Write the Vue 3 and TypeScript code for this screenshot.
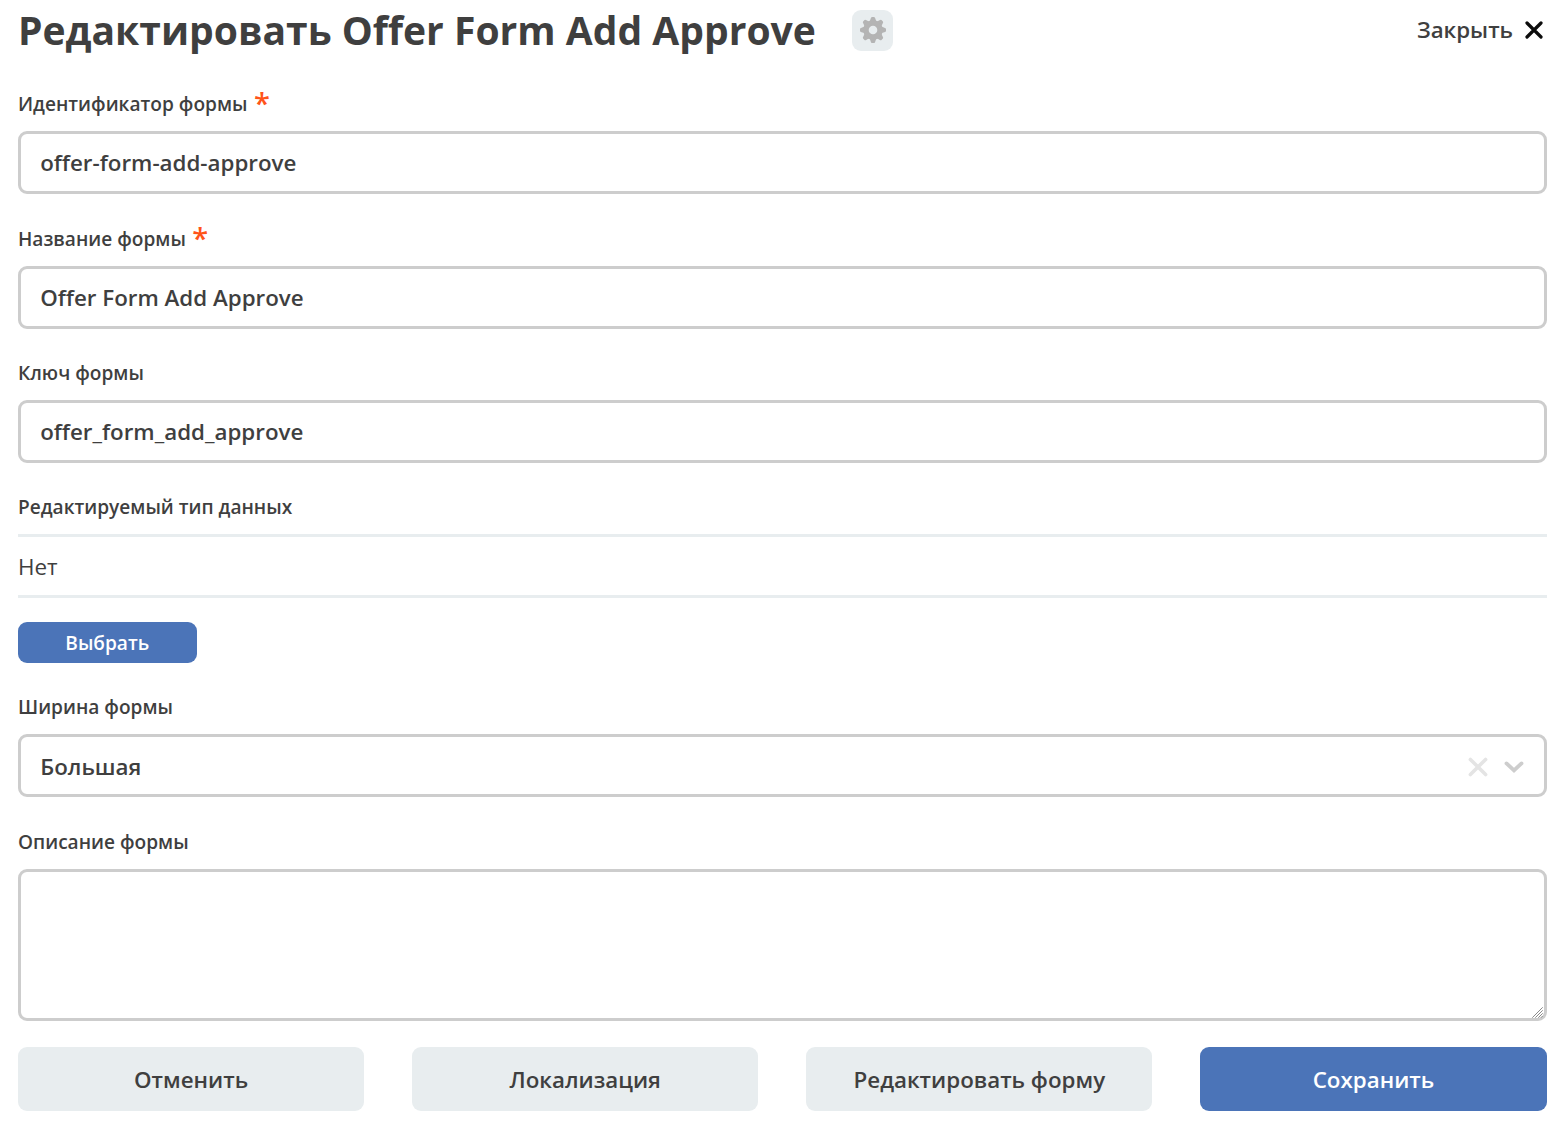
<script setup lang="ts">
import { ref } from 'vue'

interface TextField {
  id: string
  label: string
  required: boolean
}

const fields: TextField[] = [
  { id: 'identifier', label: 'Идентификатор формы', required: true },
  { id: 'name', label: 'Название формы', required: true },
  { id: 'key', label: 'Ключ формы', required: false },
]

const values = ref<Record<string, string>>({
  identifier: 'offer-form-add-approve',
  name: 'Offer Form Add Approve',
  key: 'offer_form_add_approve',
})
const width = ref('Большая')
const description = ref('')

const actions = [
  { label: 'Отменить', primary: false },
  { label: 'Локализация', primary: false },
  { label: 'Редактировать форму', primary: false },
  { label: 'Сохранить', primary: true },
]
</script>

<template>
  <main class="page">
    <header class="header">
      <h1 class="title">Редактировать Offer Form Add Approve</h1>
      <button class="gear" type="button" aria-label="Настройки">
        <svg viewBox="-13 -13 26 26" width="26" height="26" fill="#b4b4b4">
          <path v-for="n in 8" :key="n" d="M-4 -8.4Q-2.6 -9.4 -2.3 -11.4Q-2 -13 -1 -13H1Q2 -13 2.3 -11.4Q2.6 -9.4 4 -8.4V-5H-4Z" :transform="`rotate(${n * 45})`" />
          <circle r="9.4" />
          <circle r="4.3" fill="#e8edef" />
        </svg>
      </button>
      <button class="close" type="button">
        <span>Закрыть</span>
        <svg viewBox="0 0 18 18" width="18" height="18" fill="none" stroke="#0c0c0c" stroke-width="3.2" stroke-linecap="round">
          <path d="M2 2 16 16M16 2 2 16" />
        </svg>
      </button>
    </header>

    <div v-for="f in fields" :key="f.id" class="field">
      <label class="label" :for="f.id">{{ f.label }}<span v-if="f.required" class="star">*</span></label>
      <input :id="f.id" v-model="values[f.id]" class="input" type="text" />
    </div>

    <section class="type">
      <div class="label">Редактируемый тип данных</div>
      <div class="type-value">Нет</div>
      <button class="pick" type="button">Выбрать</button>
    </section>

    <div class="field">
      <div class="label">Ширина формы</div>
      <div class="input select">
        <span class="select-value">{{ width }}</span>
        <svg class="clear" viewBox="0 0 20 20" width="20" height="20" fill="none" stroke="#e4e4e4" stroke-width="3.6" stroke-linecap="round">
          <path d="M2.4 2.4 17.6 17.6M17.6 2.4 2.4 17.6" />
        </svg>
        <svg class="chevron" viewBox="0 0 20 12" width="20" height="12" fill="none" stroke="#cdcdcd" stroke-width="3.8" stroke-linecap="round">
          <path d="M2.5 2.4 10 9.4 17.5 2.4" />
        </svg>
      </div>
    </div>

    <div class="field last">
      <label class="label" for="description">Описание формы</label>
      <div class="area-wrap">
        <textarea id="description" v-model="description" class="input area"></textarea>
        <svg class="grip" viewBox="0 0 11 11" width="11" height="11" fill="none" stroke="#8a8a8a" stroke-width="1">
          <path d="M0.3 10.7 10.7 0.3M3.3 10.7 10.7 3.3M6.3 10.7 10.7 6.3M9 10.7 10.7 9" />
        </svg>
      </div>
    </div>

    <footer class="actions">
      <button v-for="a in actions" :key="a.label" type="button" class="action" :class="{ primary: a.primary }">{{ a.label }}</button>
    </footer>
  </main>
</template>

<style>
body {
  margin: 0;
  background: #fff;
}
</style>

<style scoped>
.page {
  box-sizing: border-box;
  width: 1559px;
  height: 1135px;
  padding: 0 12.5px 0 18px;
  overflow: hidden;
  font-family: "Open Sans", "Noto Sans", sans-serif;
  color: #3f3f3f;
}
button,
input,
textarea {
  font-family: inherit;
  color: inherit;
}
button {
  border: 0;
  padding: 0;
}
.header {
  display: flex;
  align-items: center;
  height: 60px;
  margin-bottom: 30px;
}
.title {
  margin: 0;
  font-size: 39.06px;
  font-weight: 700;
  line-height: 60px;
  white-space: nowrap;
}
.gear {
  display: flex;
  align-items: center;
  justify-content: center;
  width: 41px;
  height: 41px;
  margin-left: 36.5px;
  border-radius: 9px;
  background: #e8edef;
}
.close {
  display: flex;
  align-items: center;
  gap: 12px;
  margin-left: auto;
  margin-right: 3.5px;
  background: none;
  font-size: 22.3px;
  font-weight: 600;
}
.close span {
  padding-bottom: 2px;
}
.field {
  margin-bottom: 30.5px;
}
.label {
  display: flex;
  height: 41px;
  font-size: 19.1px;
  font-weight: 600;
  line-height: 28px;
  white-space: nowrap;
}
.star {
  margin-left: 6.5px;
  color: #ff5419;
  font-size: 29px;
  line-height: 25px;
}
.input {
  display: block;
  box-sizing: border-box;
  width: 100%;
  height: 63px;
  padding: 0 19.2px;
  border: 3px solid #cdcdcd;
  border-radius: 9px;
  outline: 0;
  background: #fff;
  font-size: 22.35px;
  font-weight: 600;
}
.type {
  margin-top: -0.3px;
}
.field + .type {
  margin-top: -0.3px;
}
.type-value {
  box-sizing: border-box;
  height: 63.6px;
  border-top: 3px solid #e8edef;
  border-bottom: 3px solid #e8edef;
  font-size: 22.4px;
  line-height: 60px;
}
.pick {
  display: block;
  width: 178.5px;
  height: 41.5px;
  margin: 24.2px 0 29.9px;
  border-radius: 9px;
  background: #4b74b8;
  color: #fff;
  font-size: 19.1px;
  font-weight: 600;
}
.select {
  display: flex;
  align-items: center;
}
.select-value {
  flex: 1;
  padding-top: 1px;
}
.clear {
  margin: 2px 16px 0 0;
}
.chevron {
  margin: 2px 0 0;
}
.last {
  margin-bottom: 26px;
}
.area-wrap {
  position: relative;
}
.area {
  height: 152.4px;
  resize: none;
}
.grip {
  position: absolute;
  right: 3.5px;
  bottom: 3.5px;
}
.actions {
  display: grid;
  grid-template-columns: repeat(4, 1fr);
  gap: 48px;
}
.action {
  height: 63.5px;
  padding-top: 1px;
  border-radius: 9px;
  background: #e8edef;
  font-size: 22.35px;
  font-weight: 600;
}
.primary {
  background: #4b74b8;
  color: #fff;
}
</style>
